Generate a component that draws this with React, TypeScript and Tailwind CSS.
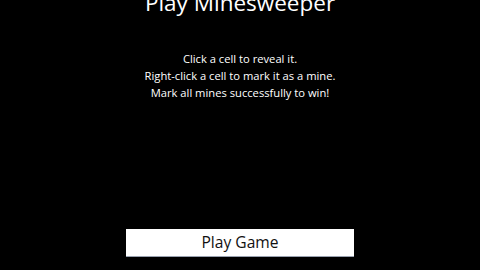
export default function App() {
  return (
    <div
      className="h-[270px] w-[480px] bg-black text-white flex flex-col items-center overflow-hidden"
      style={{ fontFamily: '"Open Sans", sans-serif' }}
    >
      <h1 className="text-[22.5px] leading-[30px] mt-[-12px] font-normal">Play Minesweeper</h1>
      <div className="mt-[32px] text-[11.2px] leading-[17px] text-center">
        <p>Click a cell to reveal it.</p>
        <p>Right-click a cell to mark it as a mine.</p>
        <p>Mark all mines successfully to win!</p>
      </div>
      <div className="flex-1" />
      <button className="mb-[13px] w-[228px] h-[28px] pt-[1px] bg-white text-[#111] text-[15.6px] border-b border-gray-400">
        Play Game
      </button>
    </div>
  );
}
